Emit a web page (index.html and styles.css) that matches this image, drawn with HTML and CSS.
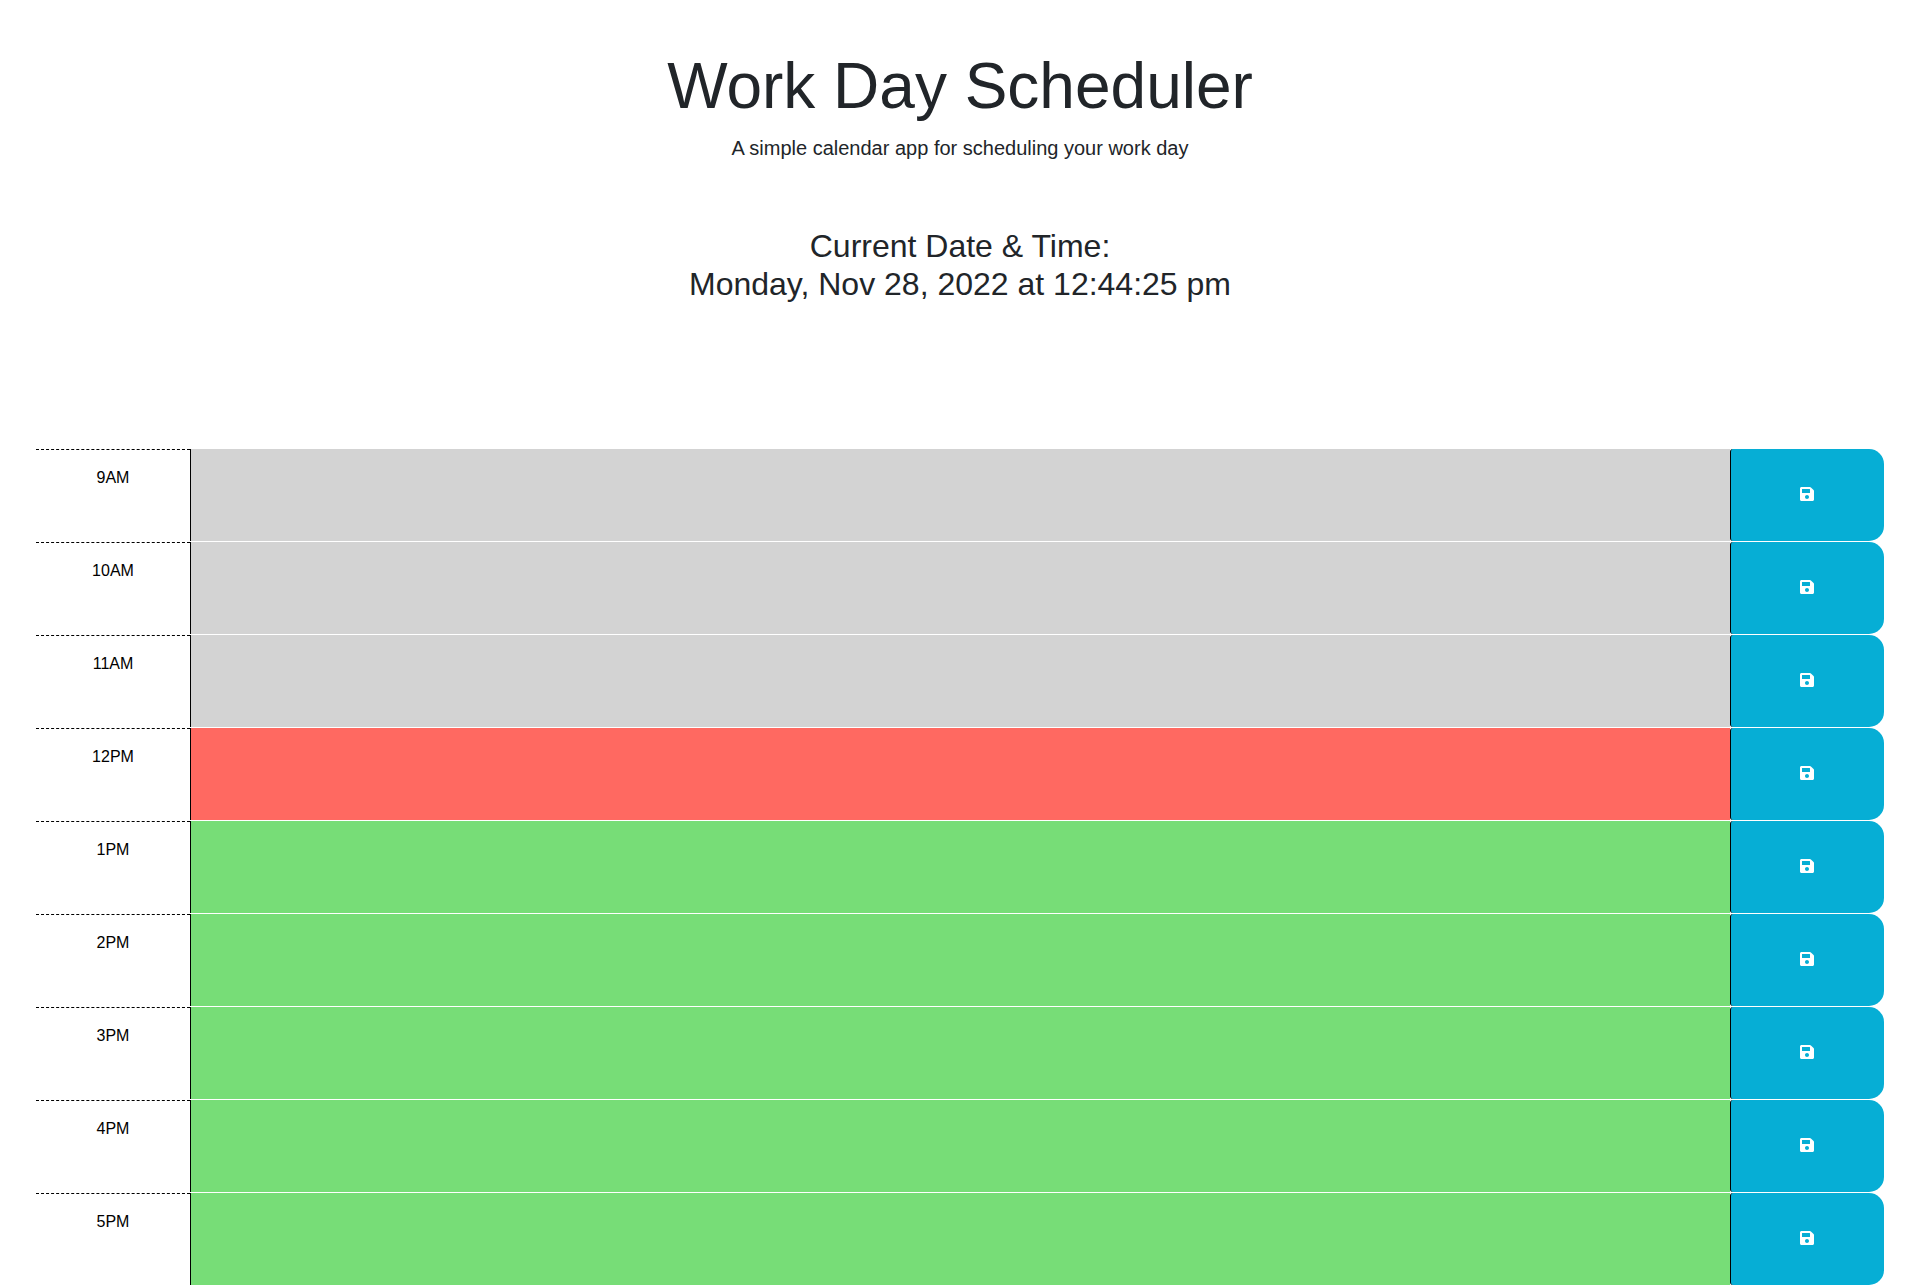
FILE: index.html
```
<!DOCTYPE html>
<html lang="en">
<head>
  <meta charset="utf-8">
  <meta name="viewport" content="width=device-width, initial-scale=1">
  <title>Work Day Scheduler</title>
  <link rel="stylesheet" href="styles.css">
</head>
<body>
  <svg width="0" height="0" class="sprite" aria-hidden="true">
    <symbol id="save" viewBox="0 0 448 512">
      <path d="M433.941 129.941l-83.882-83.882A48 48 0 0 0 316.118 32H48C21.49 32 0 53.49 0 80v352c0 26.51 21.49 48 48 48h352c26.51 0 48-21.49 48-48V163.882a48 48 0 0 0-14.059-33.941zM224 416c-35.346 0-64-28.654-64-64 0-35.346 28.654-64 64-64s64 28.654 64 64c0 35.346-28.654 64-64 64zm96-304.52V212c0 6.627-5.373 12-12 12H76c-6.627 0-12-5.373-12-12V108c0-6.627 5.373-12 12-12h228.52c3.183 0 6.235 1.26 8.485 3.515l3.48 3.48A11.996 11.996 0 0 1 320 111.48z"/>
    </symbol>
  </svg>
  <header class="masthead">
    <h1 class="title">Work Day Scheduler</h1>
    <p class="lead">A simple calendar app for scheduling your work day</p>
    <p class="clock">Current Date &amp; Time:<br>Monday, Nov 28, 2022 at 12:44:25 pm</p>
  </header>
  <main class="schedule">
    <div class="time-block past">
      <label class="hour" for="hour-9">9AM</label>
      <textarea class="entry" id="hour-9"></textarea>
      <button class="save" type="button" aria-label="Save 9AM"><svg class="icon"><use href="#save"/></svg></button>
    </div>
    <div class="time-block past">
      <label class="hour" for="hour-10">10AM</label>
      <textarea class="entry" id="hour-10"></textarea>
      <button class="save" type="button" aria-label="Save 10AM"><svg class="icon"><use href="#save"/></svg></button>
    </div>
    <div class="time-block past">
      <label class="hour" for="hour-11">11AM</label>
      <textarea class="entry" id="hour-11"></textarea>
      <button class="save" type="button" aria-label="Save 11AM"><svg class="icon"><use href="#save"/></svg></button>
    </div>
    <div class="time-block present">
      <label class="hour" for="hour-12">12PM</label>
      <textarea class="entry" id="hour-12"></textarea>
      <button class="save" type="button" aria-label="Save 12PM"><svg class="icon"><use href="#save"/></svg></button>
    </div>
    <div class="time-block future">
      <label class="hour" for="hour-13">1PM</label>
      <textarea class="entry" id="hour-13"></textarea>
      <button class="save" type="button" aria-label="Save 1PM"><svg class="icon"><use href="#save"/></svg></button>
    </div>
    <div class="time-block future">
      <label class="hour" for="hour-14">2PM</label>
      <textarea class="entry" id="hour-14"></textarea>
      <button class="save" type="button" aria-label="Save 2PM"><svg class="icon"><use href="#save"/></svg></button>
    </div>
    <div class="time-block future">
      <label class="hour" for="hour-15">3PM</label>
      <textarea class="entry" id="hour-15"></textarea>
      <button class="save" type="button" aria-label="Save 3PM"><svg class="icon"><use href="#save"/></svg></button>
    </div>
    <div class="time-block future">
      <label class="hour" for="hour-16">4PM</label>
      <textarea class="entry" id="hour-16"></textarea>
      <button class="save" type="button" aria-label="Save 4PM"><svg class="icon"><use href="#save"/></svg></button>
    </div>
    <div class="time-block future">
      <label class="hour" for="hour-17">5PM</label>
      <textarea class="entry" id="hour-17"></textarea>
      <button class="save" type="button" aria-label="Save 5PM"><svg class="icon"><use href="#save"/></svg></button>
    </div>
  </main>
</body>
</html>
```
FILE: styles.css
```
*,
*::before,
*::after {
  box-sizing: border-box;
}

body {
  margin: 0;
  background: #fff;
  color: #212529;
  font-family: "Liberation Sans", Arial, sans-serif;
  font-size: 16px;
  line-height: 24px;
}

.sprite {
  display: block;
}

.masthead {
  padding: 48px 16px 146px;
  text-align: center;
}

.title {
  margin: 0 0 8px;
  font-size: 64px;
  font-weight: 400;
  line-height: 77px;
}

.lead {
  margin: 0 0 64px;
  font-size: 20px;
  line-height: 30px;
}

.clock {
  margin: 0;
  font-size: 32px;
  line-height: 38px;
}

.schedule {
  display: flex;
  flex-direction: column;
  gap: 1px;
  padding: 0 36px;
}

.time-block {
  display: grid;
  grid-template-columns: 1fr 10fr 1fr;
}

.hour {
  padding: 16px 0;
  border-top: 1px dashed #000;
  color: #000;
  text-align: center;
}

.entry {
  display: block;
  width: 100%;
  height: 92px;
  padding: 8px 12px;
  border: 0;
  border-left: 1px solid #000;
  border-radius: 0;
  outline: 0;
  color: #000;
  font: inherit;
  resize: none;
}

.past .entry {
  background: #d3d3d3;
}

.present .entry {
  background: #ff6961;
}

.future .entry {
  background: #77dd77;
}

.save {
  display: flex;
  align-items: center;
  justify-content: center;
  padding: 0 1px 2px 0;
  border: 0;
  border-left: 1px solid #000;
  border-radius: 3px 15px 15px 3px;
  background: #06aed5;
  color: #fff;
  cursor: pointer;
}

.save:hover {
  background: #0596b8;
}

.icon {
  width: 14px;
  height: 16px;
  fill: currentColor;
}
```
